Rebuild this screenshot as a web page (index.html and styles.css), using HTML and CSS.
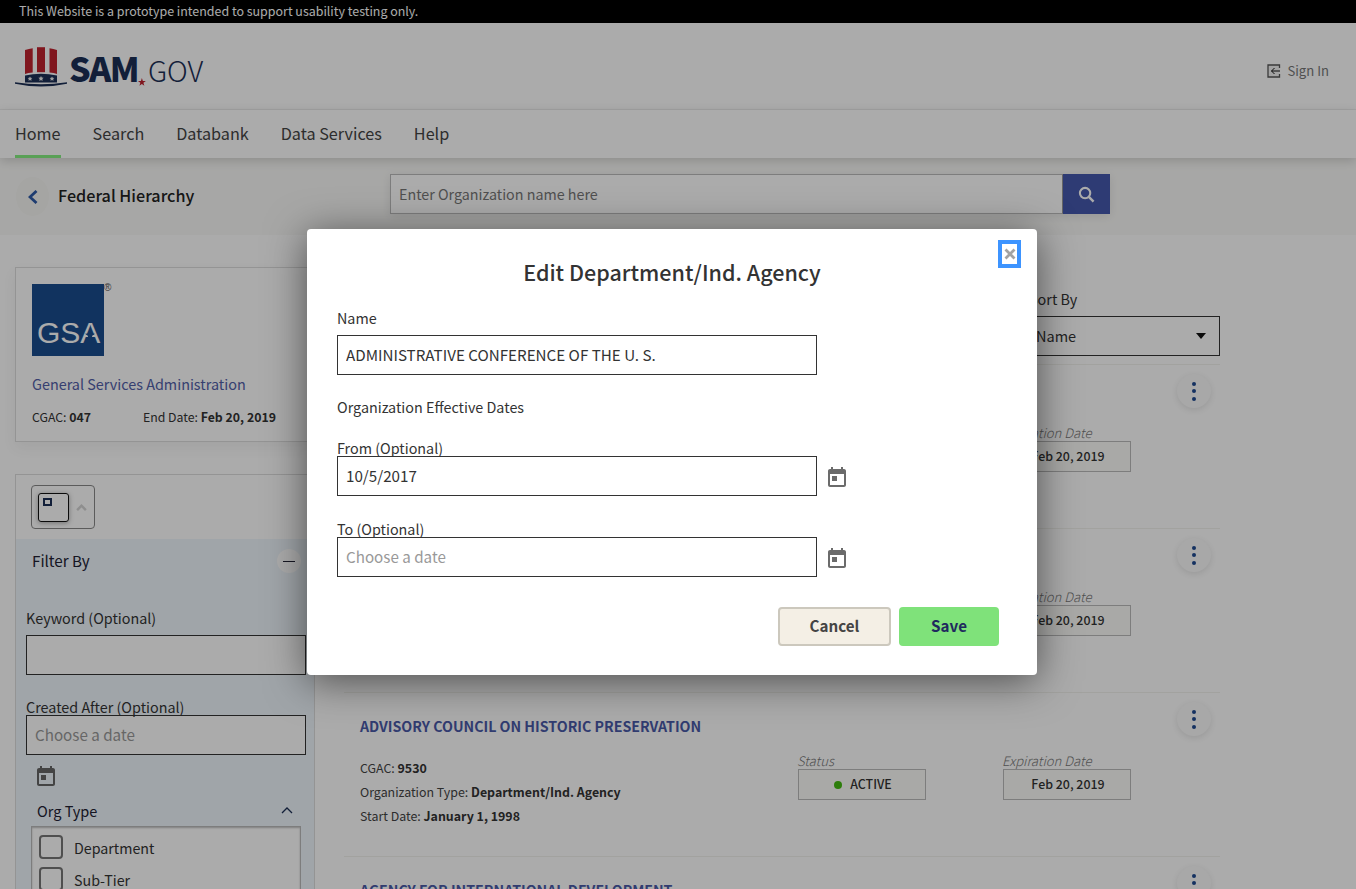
FILE: index.html
```html
<!DOCTYPE html>
<html lang="en">
<head>
<meta charset="utf-8">
<title>Federal Hierarchy - SAM.gov</title>
<link rel="stylesheet" href="styles.css">
</head>
<body>
<div class="page">
  <div class="proto-bar">This Website is a prototype intended to support usability testing only.</div>
  <header class="masthead">
    <a class="logo">
      <svg class="hat" viewBox="0 0 53 41" width="53" height="41" aria-hidden="true">
        <path d="M10 3Q14 1.800 17.700 1.300V25.600Q13 26 10 27Z" fill="#bf222e"/>
        <path d="M22 .2H30V25.200H22Z" fill="#bf222e"/>
        <path d="M34.500 1.300Q38.500 1.800 42 3V27Q39 26 34.500 25.600Z" fill="#bf222e"/>
        <path d="M10 28.500Q26 25 42 28.500V35.500H10Z" fill="#1c2f56"/>
        <path d="M0 35.200Q13 37.200 26 37.200Q39 37.200 52 35.200V36.800Q39 39.600 26 39.600Q13 39.600 0 36.800Z" fill="#1c2f56"/>
        <path fill="#eee" d="M15 29.400l.7 1.400 1.600.2-1.100 1.100.3 1.600-1.500-.8-1.500.8.3-1.600-1.100-1.100 1.600-.2zM26 29l.8 1.600 1.800.2-1.300 1.300.3 1.800-1.600-.9-1.600.9.3-1.800-1.300-1.300 1.800-.2zM37 29.400l.7 1.400 1.600.2-1.100 1.100.3 1.600-1.500-.8-1.500.8.3-1.600-1.100-1.100 1.600-.2z"/>
      </svg>
      <span class="logo-sam">SAM</span><i class="logo-star"></i><span class="logo-gov">GOV</span>
    </a>
    <a class="sign-in">
      <svg viewBox="0 0 14 14" width="14" height="14" aria-hidden="true"><path d="M12.500 4V1H1V13H12.500V10" fill="#f2f2f2" stroke="#555" stroke-width="1.300"/><path d="M13 7H4.500M7.500 4 4.500 7l3 3" fill="none" stroke="#111" stroke-width="1"/></svg>
      <span>Sign In</span>
    </a>
  </header>
  <nav class="nav">
    <a class="nav-item active">Home</a>
    <a class="nav-item">Search</a>
    <a class="nav-item">Databank</a>
    <a class="nav-item">Data Services</a>
    <a class="nav-item">Help</a>
  </nav>
  <section class="hier-bar">
    <div class="hier-title">
      <span class="back-btn"><svg viewBox="0 0 10 14" width="10" height="14" aria-hidden="true"><path d="M8.500 1 2 7l6.500 6" fill="none" stroke="#2d5aa8" stroke-width="2.800"/></svg></span>
      <h1>Federal Hierarchy</h1>
    </div>
    <div class="search">
      <input class="search-input" type="text" placeholder="Enter Organization name here">
      <button class="search-btn" type="button" aria-label="Search"><svg viewBox="0 0 18 18" width="17" height="17" aria-hidden="true"><circle cx="7.500" cy="7.500" r="5.500" fill="none" stroke="#fff" stroke-width="2.200"/><path d="m11.500 11.500 5 5" stroke="#fff" stroke-width="2.600"/></svg></button>
    </div>
  </section>
  <main class="main">
    <aside class="side">
      <div class="org-card">
        <div class="gsa-wrap">
          <div class="gsa-logo"><span>GSA</span><i class="gsa-star"></i></div><span class="reg">®</span>
        </div>
        <div class="org-name">General Services Administration</div>
        <div class="org-meta"><span class="cgac">CGAC: <b>047</b></span><span>End Date: <b>Feb 20, 2019</b></span></div>
      </div>
      <div class="panel">
        <div class="panel-top">
          <div class="toggle">
            <span class="toggle-box"><i></i></span>
            <svg viewBox="0 0 12 8" width="11" height="7" aria-hidden="true"><path d="M1 7 6 2l5 5" fill="none" stroke="#d4d4d4" stroke-width="2.800"/></svg>
          </div>
        </div>
        <div class="filters">
          <div class="filter-head"><span>Filter By</span><span class="minus"><i></i></span></div>
          <label class="f-label f-keyword">Keyword (Optional)</label>
          <input class="f-input" type="text">
          <label class="f-label f-created">Created After (Optional)</label>
          <input class="f-input" type="text" placeholder="Choose a date">
          <svg class="cal side-cal" viewBox="0 0 24 24" width="24" height="24" aria-hidden="true"><path d="M19 4h-1V2h-2v2H8V2H6v2H5C3.900 4 3 4.900 3 6v14c0 1.100.9 2 2 2h14c1.100 0 2-.9 2-2V6c0-1.100-.9-2-2-2zm0 16H5V9h14v11zM7 11h5v5H7z"/></svg>
          <div class="org-type"><span>Org Type</span><svg viewBox="0 0 12 8" width="12" height="8" aria-hidden="true"><path d="M1 7 6 2l5 5" fill="none" stroke="#1c2f56" stroke-width="1.300"/></svg></div>
          <div class="checks">
            <div class="check"><span class="box"></span>Department</div>
            <div class="check"><span class="box"></span>Sub-Tier</div>
          </div>
        </div>
      </div>
    </aside>
    <section class="results">
      <div class="sort">
        <label class="sort-label">Sort By</label>
        <div class="sort-select"><span>Name</span><i class="caret"></i></div>
      </div>
      <article class="row">
        <div class="row-body">
          <h2>ADMINISTRATIVE CONFERENCE OF THE U. S.</h2>
          <div class="row-details">
            <div class="info"><div>CGAC: <b>9532</b></div><div>Organization Type: <b>Department/Ind. Agency</b></div><div>Start Date: <b>January 1, 1998</b></div></div>
            <div class="stat"><em>Status</em><div class="stat-box"><i class="dot"></i>ACTIVE</div></div>
            <div class="stat"><em>Expiration Date</em><div class="stat-box">Feb 20, 2019</div></div>
          </div>
        </div>
        <span class="kebab"><i></i><i></i><i></i></span>
      </article>
      <article class="row">
        <div class="row-body">
          <h2>ADMINISTRATIVE CONFERENCE OF THE U. S.</h2>
          <div class="row-details">
            <div class="info"><div>CGAC: <b>9531</b></div><div>Organization Type: <b>Department/Ind. Agency</b></div><div>Start Date: <b>January 1, 1998</b></div></div>
            <div class="stat"><em>Status</em><div class="stat-box"><i class="dot"></i>ACTIVE</div></div>
            <div class="stat"><em>Expiration Date</em><div class="stat-box">Feb 20, 2019</div></div>
          </div>
        </div>
        <span class="kebab"><i></i><i></i><i></i></span>
      </article>
      <article class="row">
        <div class="row-body">
          <h2>ADVISORY COUNCIL ON HISTORIC PRESERVATION</h2>
          <div class="row-details">
            <div class="info"><div>CGAC: <b>9530</b></div><div>Organization Type: <b>Department/Ind. Agency</b></div><div>Start Date: <b>January 1, 1998</b></div></div>
            <div class="stat"><em>Status</em><div class="stat-box"><i class="dot"></i>ACTIVE</div></div>
            <div class="stat"><em>Expiration Date</em><div class="stat-box">Feb 20, 2019</div></div>
          </div>
        </div>
        <span class="kebab"><i></i><i></i><i></i></span>
      </article>
      <article class="row">
        <div class="row-body">
          <h2>AGENCY FOR INTERNATIONAL DEVELOPMENT</h2>
        </div>
        <span class="kebab"><i></i><i></i><i></i></span>
      </article>
    </section>
  </main>
  <div class="overlay"></div>
  <div class="modal" role="dialog" aria-label="Edit Department/Ind. Agency">
    <button class="close" type="button" aria-label="Close"><svg viewBox="0 0 12 12" width="12" height="12" aria-hidden="true"><path d="m1.500 1.500 9 9m0-9-9 9" stroke="#a3a3a3" stroke-width="2.800"/></svg></button>
    <h2 class="modal-title">Edit Department/Ind. Agency</h2>
    <label class="m-label m-name">Name</label>
    <input class="m-input" type="text" value="ADMINISTRATIVE CONFERENCE OF THE U. S.">
    <div class="m-label m-dates">Organization Effective Dates</div>
    <label class="m-label m-from">From (Optional)</label>
    <div class="date-row">
      <input class="m-input" type="text" value="10/5/2017">
      <svg class="cal" viewBox="0 0 24 24" width="24" height="24" aria-hidden="true"><path d="M19 4h-1V2h-2v2H8V2H6v2H5C3.900 4 3 4.900 3 6v14c0 1.100.9 2 2 2h14c1.100 0 2-.9 2-2V6c0-1.100-.9-2-2-2zm0 16H5V9h14v11zM7 11h5v5H7z"/></svg>
    </div>
    <label class="m-label m-to">To (Optional)</label>
    <div class="date-row">
      <input class="m-input" type="text" placeholder="Choose a date">
      <svg class="cal" viewBox="0 0 24 24" width="24" height="24" aria-hidden="true"><path d="M19 4h-1V2h-2v2H8V2H6v2H5C3.900 4 3 4.900 3 6v14c0 1.100.9 2 2 2h14c1.100 0 2-.9 2-2V6c0-1.100-.9-2-2-2zm0 16H5V9h14v11zM7 11h5v5H7z"/></svg>
    </div>
    <div class="actions">
      <button class="btn btn-cancel" type="button">Cancel</button>
      <button class="btn btn-save" type="button">Save</button>
    </div>
  </div>
</div>
</body>
</html>
```
FILE: styles.css
```css
* { box-sizing: border-box; }
html, body { margin: 0; height: 100%; }
body {
  font-family: "Noto Sans CJK SC", "Noto Sans", "Liberation Sans", sans-serif;
  color: #333;
  background: #fff;
}
input, button { font-family: inherit; }
.page { position: relative; height: 100vh; overflow: hidden; background: #fff; }

.proto-bar { height: 23px; background: #000; color: #fff; font-size: 12.450px; line-height: 23px; padding-left: 19px; }

.masthead { height: 87px; display: flex; align-items: center; justify-content: space-between; padding: 0 27px 0 15px; border-bottom: 1px solid #f0f0f0; }
.logo { display: flex; align-items: baseline; color: #1c2f56; height: 41px; margin-top: 3px; }
.hat { align-self: flex-start; flex: none; margin-right: 1px; }
.logo-sam { font-size: 34px; font-weight: 900; line-height: 41px; letter-spacing: -1.700px; }
.logo-star { width: 8px; height: 8px; margin: 0 2px 2px 0; background: #bf222e; clip-path: polygon(50% 0, 62% 36%, 100% 38%, 69% 60%, 81% 96%, 50% 74%, 19% 96%, 31% 60%, 0 38%, 38% 36%); align-self: flex-end; }
.logo-gov { font-size: 28.500px; font-weight: 300; line-height: 41px; }
.sign-in { display: flex; align-items: center; gap: 6px; font-size: 13.100px; color: #777; padding-top: 9px; }

.nav { height: 48px; display: flex; gap: 32px; padding-left: 15px; box-shadow: 0 3px 10px rgba(0,0,0,.16); position: relative; background: #fff; }
.nav-item { font-size: 16.200px; line-height: 47px; color: #444; height: 48px; }
.nav-item.active { border-bottom: 3px solid #85ef80; }

.hier-bar { height: 77px; background: #fafaf8; display: flex; align-items: flex-start; padding: 16px 0 0 16px; }
.hier-title { width: 374px; display: flex; align-items: center; gap: 9px; padding-top: 3px; }
.back-btn { width: 33px; height: 39px; border-radius: 50%; background: #f6f6f3; display: flex; align-items: center; justify-content: center; }
.hier-title h1 { margin: 0 0 4px; font-size: 16.200px; font-weight: 500; color: #222; line-height: 24px; }
.search { display: flex; width: 720px; height: 40px; box-shadow: 0 2px 10px rgba(0,0,0,.1); }
.search-input { flex: 1; border: 1px solid #bbb; border-right-color: #999; background: #fff; font-size: 14.300px; padding: 0 8px 2px; outline: 0; }
.search-input::placeholder { color: #777; opacity: 1; }
.search-btn { width: 47px; border: 0; background: #4558ad; display: flex; align-items: center; justify-content: center; padding: 0; }

.main { display: flex; gap: 29px; padding: 32px 136px 0 15px; }
.side { width: 300px; flex: none; }
.org-card { height: 175px; border: 1px solid #ddd; padding: 16px; box-shadow: 0 6px 14px rgba(0,0,0,.05); }
.gsa-wrap { display: flex; align-items: flex-start; }
.gsa-logo { position: relative; width: 72px; height: 72px; background: #1a4c8e; color: #fff; display: flex; align-items: flex-end; padding: 0 0 6px 5px; }
.gsa-logo span { font-family: "Liberation Sans", sans-serif; font-size: 30px; font-weight: 400; line-height: 34px; }
.gsa-star { position: absolute; left: 53px; top: 46px; width: 10px; height: 10px; background: #1a4c8e; clip-path: polygon(50% 0, 62% 36%, 100% 38%, 69% 60%, 81% 96%, 50% 74%, 19% 96%, 31% 60%, 0 38%, 38% 36%); }
.reg { font-family: "Liberation Sans", sans-serif; font-size: 10px; color: #555; line-height: 12px; margin-top: -2px; }
.org-name { margin-top: 18px; font-size: 14.400px; line-height: 20px; color: #5260a8; }
.org-meta { margin-top: 13px; font-size: 12.300px; line-height: 20px; display: flex; color: #333; }
.cgac { width: 111px; }
b { font-weight: 700; }

.panel { margin-top: 32px; border: 1px solid #ddd; border-bottom: 0; }
.panel-top { height: 64px; padding: 10px 0 0 15px; }
.toggle { width: 64px; height: 44px; border: 1px solid #888; border-radius: 4px; display: flex; align-items: center; gap: 7px; padding-left: 6px; }
.toggle-box { width: 31px; height: 29px; border: 1px solid #111; border-radius: 3px; padding: 4px; box-shadow: 0 1px 5px rgba(0,0,0,.35); display: block; flex: none; }
.toggle-box i { display: block; width: 9px; height: 8px; border: 2px solid #1c2f56; }
.filters { background: #eff6fc; padding: 0 8px 0 10px; }
.filter-head { display: flex; justify-content: space-between; align-items: center; height: 44px; padding: 0 5px 2px 6px; font-size: 15.200px; color: #223; }
.minus { width: 24px; height: 24px; border-radius: 50%; background: #fff; display: flex; align-items: center; justify-content: center; margin-top: 2px; }
.minus i { width: 12px; height: 1px; background: #223; }
.f-label { display: block; font-size: 14.350px; line-height: 20px; color: #333; }
.f-keyword { margin-top: 25px; }
.f-created { margin-top: 22px; }
.f-input { display: block; width: 280px; height: 40px; border: 1px solid #333; background: #fff; font-size: 15.200px; padding: 0 8px 2px; border-radius: 0; outline: 0; }
.f-keyword + .f-input { margin-top: 7px; }
.f-created + .f-input { margin-top: -2px; }
.f-input::placeholder, .m-input::placeholder { color: #999; opacity: 1; }
.cal { fill: #6b6b6b; flex: none; display: block; }
.date-row .cal { margin-top: 2px; }
.side-cal { margin: 9px 0 0 8px; fill: #666; }
.org-type { display: flex; justify-content: space-between; align-items: center; margin: 10px 13px 0 11px; height: 24px; font-size: 14.500px; color: #223; }
.checks { margin: 4px 5px 0 5px; background: #fff; border: 1px solid #bbb; box-shadow: inset 0 1px 2px rgba(0,0,0,.25); padding: 4px 7px; width: 270px; }
.check { display: flex; align-items: center; gap: 11px; height: 32px; font-size: 14.250px; color: #333; }
.box { width: 24px; height: 24px; border: 2px solid #777; border-radius: 4px; flex: none; }

.results { width: 876px; flex: none; }
.sort { height: 97px; padding: 23px 0 0 685px; }
.sort-label { display: block; font-size: 14.400px; line-height: 18px; color: #333; }
.sort-select { width: 191px; height: 40px; margin-top: 8px; border: 1px solid #333; display: flex; align-items: center; justify-content: space-between; padding: 0 13px 2px 6px; font-size: 14.500px; color: #333; }
.caret { width: 0; height: 0; border-left: 5px solid transparent; border-right: 5px solid transparent; border-top: 6px solid #111; margin-top: 2px; }

.row { height: 164px; border-top: 1px solid #f2f2ee; display: flex; padding: 9px 9px 0 16px; }
.row-body { flex: 1; padding-top: 14px; }
.row h2 { margin: 0; font-size: 14.200px; line-height: 20px; font-weight: 700; color: #4a5aa8; }
.row-details { display: flex; margin-top: 16px; }
.info { width: 438px; font-size: 12.400px; line-height: 24px; padding-top: 4px; color: #444; }
.info b { color: #333; }
.stat { width: 128px; margin-right: 77px; flex: none; }
.stat:last-child { margin-right: 0; }
.stat em { display: block; margin-left: -1px; font-size: 13.100px; font-weight: 300; line-height: 17px; color: #777; }
.stat-box { height: 31px; border: 1px solid #bbb; background: #fdfdf9; display: flex; align-items: center; justify-content: center; gap: 8px; padding: 0 0 2px 2px; font-size: 12.400px; font-weight: 500; color: #333; }
.dot { width: 8px; height: 8px; border-radius: 50%; background: #44bb11; margin-top: 2px; }
.kebab { width: 34px; height: 34px; border-radius: 50%; background: #fbfbfb; box-shadow: 0 2px 6px rgba(0,0,0,.1); display: flex; flex-direction: column; align-items: center; justify-content: center; gap: 3.500px; flex: none; }
.kebab i { width: 4px; height: 4px; border-radius: 50%; background: #1f4a90; }

.overlay { position: absolute; inset: 0; background: rgba(0,0,0,.33); }
.modal { position: absolute; left: 307px; top: 229px; width: 730px; height: 446px; background: #fff; border-radius: 4px; box-shadow: 0 6px 40px rgba(0,0,0,.55); padding: 28px 30px 0; }
.close { position: absolute; left: 691px; top: 11px; width: 23px; height: 28px; border: 4px solid #3d94ff; background: #fff; padding: 0; display: flex; align-items: center; justify-content: center; }
.modal-title { margin: 0; text-align: center; font-size: 21.500px; line-height: 30px; font-weight: 500; color: #333; }
.m-label { display: block; font-size: 14.350px; line-height: 20px; color: #333; }
.m-name { margin-top: 21px; }
.m-dates { margin-top: 22px; }
.m-from { margin-top: 21px; }
.m-to { margin-top: 23px; }
.m-input { display: block; width: 480px; height: 40px; border: 1px solid #333; background: #fff; font-size: 15.200px; color: #333; padding: 0 8px 2px; border-radius: 0; outline: 0; }
.m-name + .m-input { margin-top: 7px; }
.m-label + .date-row { margin-top: -2px; }
.date-row { display: flex; align-items: center; gap: 8px; }
.actions { display: flex; justify-content: flex-end; gap: 8px; margin: 30px 8px 0 0; }
.btn { height: 39px; border-radius: 4px; font-size: 15.200px; font-weight: 700; padding: 0 0 3px; }
.btn-cancel { width: 113px; background: #f4efe5; border: 2px solid #ccc8bd; color: #444; }
.btn-save { width: 100px; background: #7fe27a; border: 0; color: #1f2a5e; }
```
